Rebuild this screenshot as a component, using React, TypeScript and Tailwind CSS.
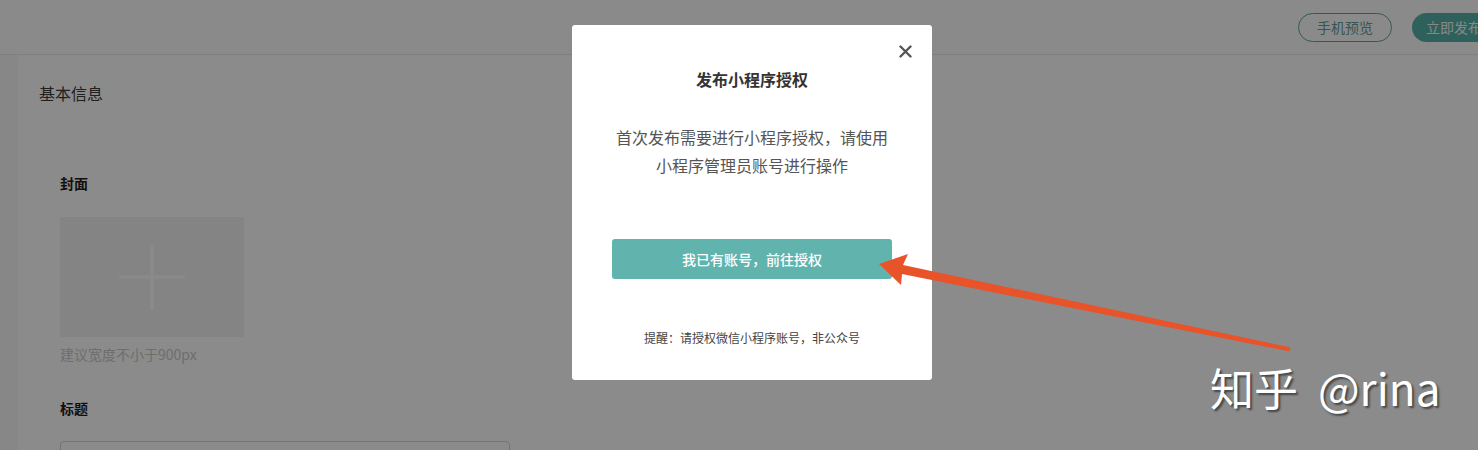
import React from 'react';

const font = { fontFamily: '"Noto Sans CJK SC", "PingFang SC", "Liberation Sans", sans-serif' };

// Page under the mask
const EditorPage = () => (
  <div className="flex h-full flex-col bg-[#f6f6f6]">
    <div className="flex h-[55px] shrink-0 items-center justify-end gap-5 border-b border-[#e2e2e2]">
      <button className="h-[29px] w-[94px] rounded-full border border-[#5c9f97] text-[14px] text-[#5f9a93]">
        手机预览
      </button>
      <button className="-mr-[14px] h-[29px] w-[80px] whitespace-nowrap rounded-full bg-[#55aea4] text-left text-[14px] text-[#f0f0f0] indent-[14px]">
        立即发布
      </button>
    </div>

    <div className="flex flex-1">
      <div className="w-[18px] bg-[#f1f1f1]" />
      <div className="mt-[2px] flex-1 bg-[#f8f8f8] pl-[21px] pt-[24px]">
        <div className="text-[16px] leading-[24px] text-[#3a3a3a]">基本信息</div>

        <div className="pl-[21px] pt-[68px]">
          <div className="text-[14px] font-semibold leading-[20px] text-[#1e1e1e]">封面</div>
          <div className="mt-[24px] flex h-[120px] w-[184px] items-center justify-center bg-[#ececec]">
            <svg width="66" height="66" viewBox="0 0 66 66">
              <path d="M33 0v66M0 33h66" stroke="#f7f7f7" strokeWidth="3" />
            </svg>
          </div>
          <div className="mt-[7px] text-[14px] leading-[20px] text-[#c4c4c4]">建议宽度不小于900px</div>

          <div className="mt-[34px] text-[14px] font-semibold leading-[20px] text-[#1e1e1e]">标题</div>
          <div className="mt-[23px] flex h-[36px] w-[450px] justify-end rounded-[4px] border border-[#cfcfcf] pr-[10px] pt-[8px]">
            <div className="h-[6px] w-[12px] bg-[#d8d8d8]" />
          </div>
        </div>
      </div>
    </div>
  </div>
);

const AuthModal = () => (
  <div className="absolute left-[572px] top-[25px] flex h-[355px] w-[360px] flex-col items-center rounded-[3px] bg-white">
    <button className="absolute right-[20px] top-[19px] flex h-[14px] w-[14px] items-center justify-center">
      <svg width="13" height="13" viewBox="0 0 13 13">
        <path d="M1.5 1.5l10 10M11.5 1.5l-10 10" stroke="#555" strokeWidth="2.4" strokeLinecap="round" />
      </svg>
    </button>

    <h3 className="mt-[43px] text-[16px] font-bold leading-[22px] text-[#333]">发布小程序授权</h3>

    <p className="mt-[33px] text-center text-[16px] leading-[28px] text-[#555]">
      首次发布需要进行小程序授权，请使用
      <br />
      小程序管理员账号进行操作
    </p>

    <button className="mt-[60px] h-[40px] w-[280px] rounded-[3px] bg-[#60b4ad] text-[14px] font-medium text-white">
      我已有账号，前往授权
    </button>

    <p className="mt-[50px] text-[12px] leading-[18px] text-[#444]">提醒：请授权微信小程序账号，非公众号</p>
  </div>
);

export default function App() {
  return (
    <div className="relative h-[450px] w-full overflow-hidden" style={font}>
      <EditorPage />

      {/* mask */}
      <div className="absolute inset-0 bg-black/[0.44]" />

      <AuthModal />

      {/* annotation arrow */}
      <svg className="pointer-events-none absolute left-0 top-0" width="1478" height="450" viewBox="0 0 1478 450">
        <path
          d="M879 264 L908 254 L903 265 L1288.4 347 L1287.6 351 L902 274 L901 285 Z"
          fill="#e8532a"
        />
        <circle cx="1288" cy="349" r="2.2" fill="#e8532a" />
      </svg>

      {/* watermark */}
      <div className="pointer-events-none absolute left-[1210px] top-[358px] flex whitespace-nowrap text-[44px] leading-[58px] text-white [text-shadow:2px_2px_2px_rgba(0,0,0,0.5)]">
        <span>知乎</span>
        <span className="ml-[20px]">@rina</span>
      </div>
    </div>
  );
}
